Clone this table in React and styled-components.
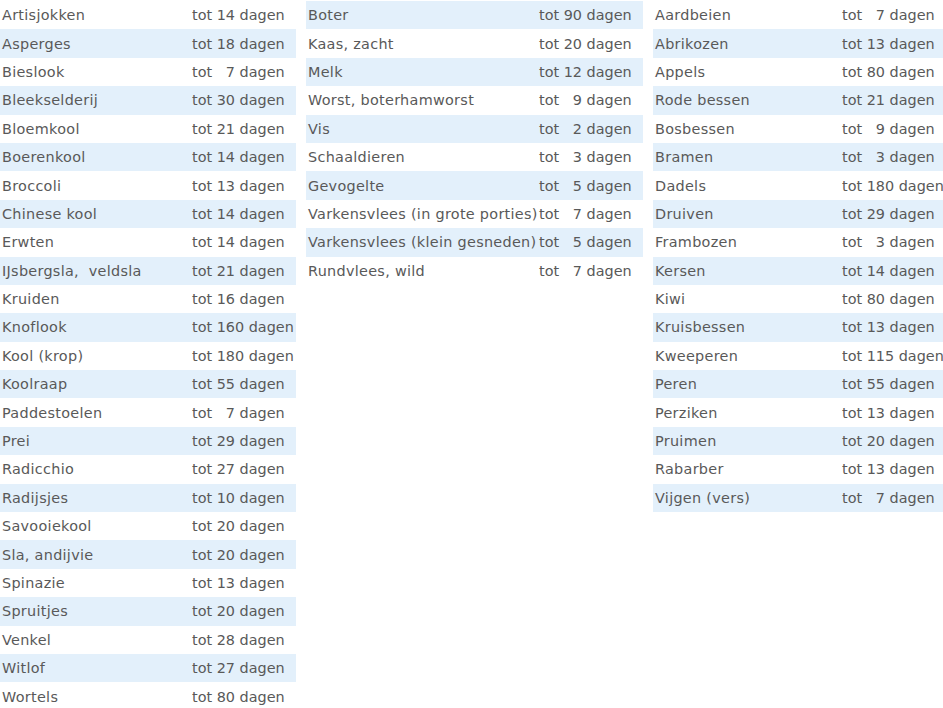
import styled, { createGlobalStyle } from "styled-components";

const GlobalStyle = createGlobalStyle`
  body {
    margin: 0;
    background: #fff;
  }
`;

const groente = [
  ["Artisjokken", 14], ["Asperges", 18], ["Bieslook", 7], ["Bleekselderij", 30],
  ["Bloemkool", 21], ["Boerenkool", 14], ["Broccoli", 13], ["Chinese kool", 14],
  ["Erwten", 14], ["IJsbergsla,  veldsla", 21], ["Kruiden", 16], ["Knoflook", 160],
  ["Kool (krop)", 180], ["Koolraap", 55], ["Paddestoelen", 7], ["Prei", 29],
  ["Radicchio", 27], ["Radijsjes", 10], ["Savooiekool", 20], ["Sla, andijvie", 20],
  ["Spinazie", 13], ["Spruitjes", 20], ["Venkel", 28], ["Witlof", 27], ["Wortels", 80],
];

const zuivelVlees = [
  ["Boter", 90], ["Kaas, zacht", 20], ["Melk", 12], ["Worst, boterhamworst", 9],
  ["Vis", 2], ["Schaaldieren", 3], ["Gevogelte", 5],
  ["Varkensvlees (in grote porties)", 7], ["Varkensvlees (klein gesneden)", 5],
  ["Rundvlees, wild", 7],
];

const fruit = [
  ["Aardbeien", 7], ["Abrikozen", 13], ["Appels", 80], ["Rode bessen", 21],
  ["Bosbessen", 9], ["Bramen", 3], ["Dadels", 180], ["Druiven", 29],
  ["Frambozen", 3], ["Kersen", 14], ["Kiwi", 80], ["Kruisbessen", 13],
  ["Kweeperen", 115], ["Peren", 55], ["Perziken", 13], ["Pruimen", 20],
  ["Rabarber", 13], ["Vijgen (vers)", 7],
];

const Page = styled.div`
  display: flex;
  align-items: flex-start;
  gap: 10px;
  padding-top: 1px;
  font-family: "DejaVu Sans", Verdana, sans-serif;
  font-size: 14.4px;
  color: #595959;
`;

const List = styled.div`
  width: ${(p) => p.$width}px;
  flex-shrink: 0;
`;

const Row = styled.div`
  display: flex;
  align-items: center;
  height: 28.4px;
  white-space: pre;
  background: ${(p) => (p.$shaded ? "#e3f0fb" : "transparent")};
`;

const Name = styled.span`
  width: ${(p) => p.$width}px;
  flex-shrink: 0;
  padding-left: 2px;
  box-sizing: border-box;
  letter-spacing: 0.3px;
`;

const Days = styled.span`
  display: inline-block;
  min-width: 2ch;
  text-align: right;
`;

function ShelfList({ items, width, nameWidth, startShaded }) {
  return (
    <List $width={width}>
      {items.map(([name, days], i) => (
        <Row key={name} $shaded={(i % 2 === 0) === startShaded}>
          <Name $width={nameWidth}>{name}</Name>
          <span>
            tot <Days>{days}</Days> dagen
          </span>
        </Row>
      ))}
    </List>
  );
}

export default function App() {
  return (
    <>
      <GlobalStyle />
      <Page>
        <ShelfList items={groente} width={296} nameWidth={192} startShaded={false} />
        <ShelfList items={zuivelVlees} width={337} nameWidth={233} startShaded={true} />
        <ShelfList items={fruit} width={290} nameWidth={189} startShaded={false} />
      </Page>
    </>
  );
}
